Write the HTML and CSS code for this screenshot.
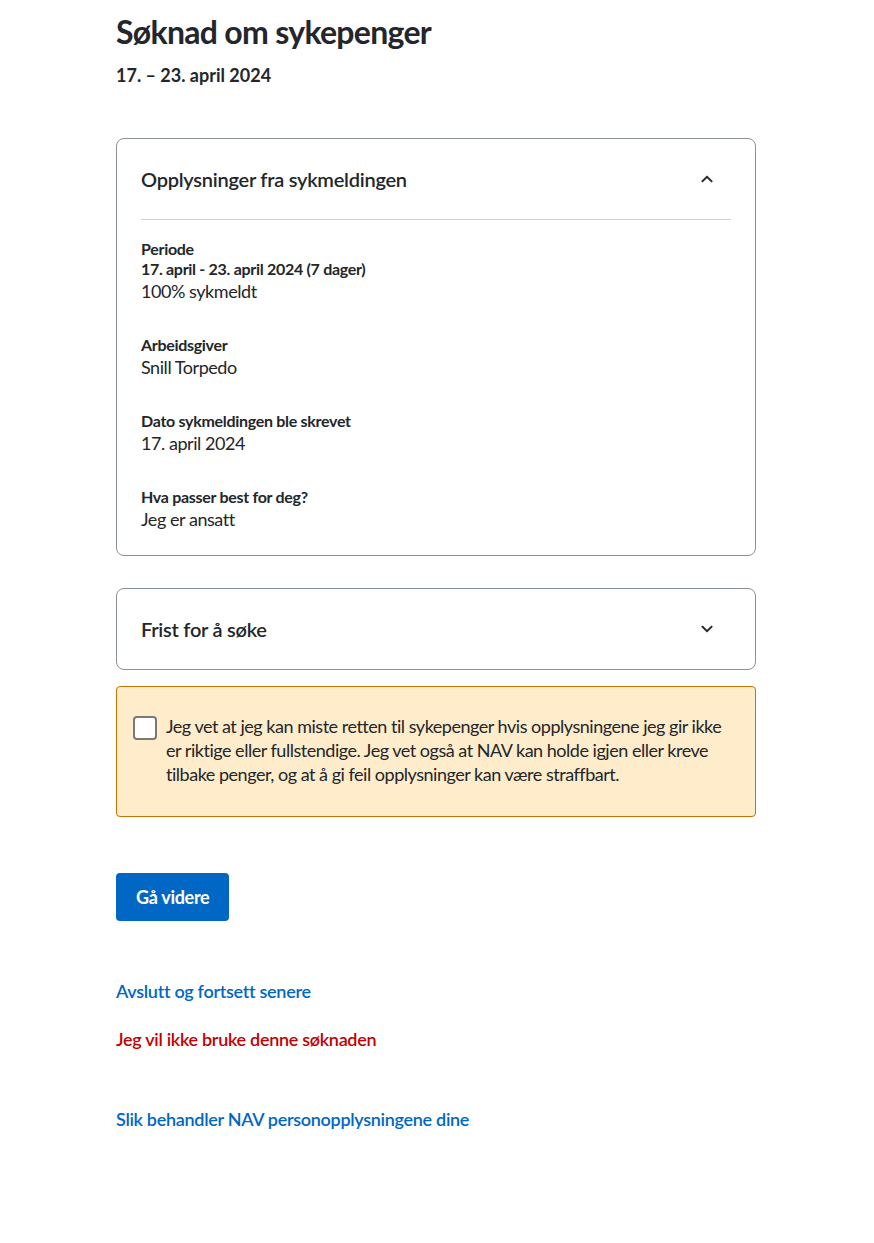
FILE: index.html
```html
<!DOCTYPE html>
<html lang="no">
<head>
<meta charset="utf-8">
<title>Søknad om sykepenger</title>
<link rel="stylesheet" href="styles.css">
</head>
<body>
<main class="page">
  <header class="head">
    <h1 class="title">Søknad om sykepenger</h1>
    <p class="subtitle">17. – 23. april 2024</p>
  </header>

  <section class="card card-open">
    <div class="card-head">
      <h2 class="card-title">Opplysninger fra sykmeldingen</h2>
      <svg class="chev" width="24" height="24" viewBox="0 0 24 24" aria-hidden="true"><path d="M7.5 14.25 12 9.75l4.5 4.5" fill="none" stroke="#23262a" stroke-width="1.9" stroke-linecap="square"/></svg>
    </div>
    <div class="card-body">
      <div class="info">
        <p class="label">Periode</p>
        <p class="label">17. april - 23. april 2024 (7 dager)</p>
        <p class="value">100% sykmeldt</p>
      </div>
      <div class="info">
        <p class="label">Arbeidsgiver</p>
        <p class="value">Snill Torpedo</p>
      </div>
      <div class="info">
        <p class="label">Dato sykmeldingen ble skrevet</p>
        <p class="value">17. april 2024</p>
      </div>
      <div class="info">
        <p class="label">Hva passer best for deg?</p>
        <p class="value">Jeg er ansatt</p>
      </div>
    </div>
  </section>

  <section class="card card-closed">
    <div class="card-head">
      <h2 class="card-title">Frist for å søke</h2>
      <svg class="chev" width="24" height="24" viewBox="0 0 24 24" aria-hidden="true"><path d="M7.5 9.75 12 14.25l4.5-4.5" fill="none" stroke="#23262a" stroke-width="1.9" stroke-linecap="square"/></svg>
    </div>
  </section>

  <div class="warning">
    <label class="check">
      <span class="box"></span>
      <span class="check-text">Jeg vet at jeg kan miste retten til sykepenger hvis opplysningene jeg gir ikke er riktige eller fullstendige. Jeg vet også at NAV kan holde igjen eller kreve tilbake penger, og at å gi feil opplysninger kan være straffbart.</span>
    </label>
  </div>

  <button class="btn" type="button">Gå videre</button>

  <div class="links">
    <a class="link" href="#">Avslutt og fortsett senere</a>
    <a class="link danger" href="#">Jeg vil ikke bruke denne søknaden</a>
  </div>

  <a class="link privacy" href="#">Slik behandler NAV personopplysningene dine</a>
</main>
</body>
</html>
```

FILE: styles.css
```css
* { box-sizing: border-box; }
html, body { margin: 0; padding: 0; background: #ffffff; }
body {
  font-family: "Lato", "Liberation Sans", sans-serif;
  color: #23262a;
  height: 1243px;
  overflow: hidden;
}
.page {
  width: 640px;
  margin-left: 116px;
  padding-top: 12px;
  display: flex;
  flex-direction: column;
}
.head { margin-bottom: 51px; }
.title {
  margin: 0;
  font-size: 32px;
  line-height: 40px;
  font-weight: 700;
  letter-spacing: -0.7px;
}
.subtitle {
  margin: 11px 0 0;
  font-size: 18px;
  line-height: 24px;
  font-weight: 700;
}
.card {
  border: 1px solid #8a8f9c;
  border-radius: 8px;
  padding: 0 24px;
}
.card-closed { margin-top: 32px; }
.card-head {
  height: 80px;
  display: flex;
  align-items: center;
  justify-content: space-between;
}
.card-title {
  margin: 0;
  font-size: 20px;
  line-height: 28px;
  font-weight: 600;
  letter-spacing: -0.25px;
}
.chev { margin-right: 12px; }
.card-body {
  border-top: 1px solid #cfd3d8;
  padding: 19px 0 24px;
  display: flex;
  flex-direction: column;
  gap: 32px;
}
.info p { margin: 0; }
.label {
  font-size: 16px;
  line-height: 20px;
  font-weight: 700;
  letter-spacing: -0.3px;
}
.value {
  font-size: 18px;
  line-height: 24px;
  letter-spacing: -0.45px;
}
.warning {
  margin-top: 16px;
  background: #ffecca;
  border: 1px solid #c77300;
  border-radius: 4px;
  padding: 27px 16px 30px 16px;
}
.check { display: flex; align-items: flex-start; gap: 9px; }
.box {
  flex: none;
  width: 24px;
  height: 24px;
  margin-top: 2px;
  background: #fff;
  border: 2px solid #797979;
  border-radius: 4px;
}
.check-text {
  font-size: 18px;
  line-height: 24px;
  letter-spacing: -0.48px;
}
.btn {
  align-self: flex-start;
  margin-top: 56px;
  height: 48px;
  padding: 0 20px;
  background: #0067c5;
  color: #fff;
  border: none;
  border-radius: 4px;
  font-family: inherit;
  font-size: 18px;
  font-weight: 700;
  letter-spacing: -0.3px;
}
.links {
  margin-top: 58px;
  display: flex;
  flex-direction: column;
  gap: 24px;
}
.link {
  align-self: flex-start;
  color: #0067c5;
  text-decoration: none;
  font-size: 18px;
  line-height: 24px;
  font-weight: 600;
  letter-spacing: -0.3px;
}
.danger { color: #c30000; }
.privacy { margin-top: 56px; }
```
